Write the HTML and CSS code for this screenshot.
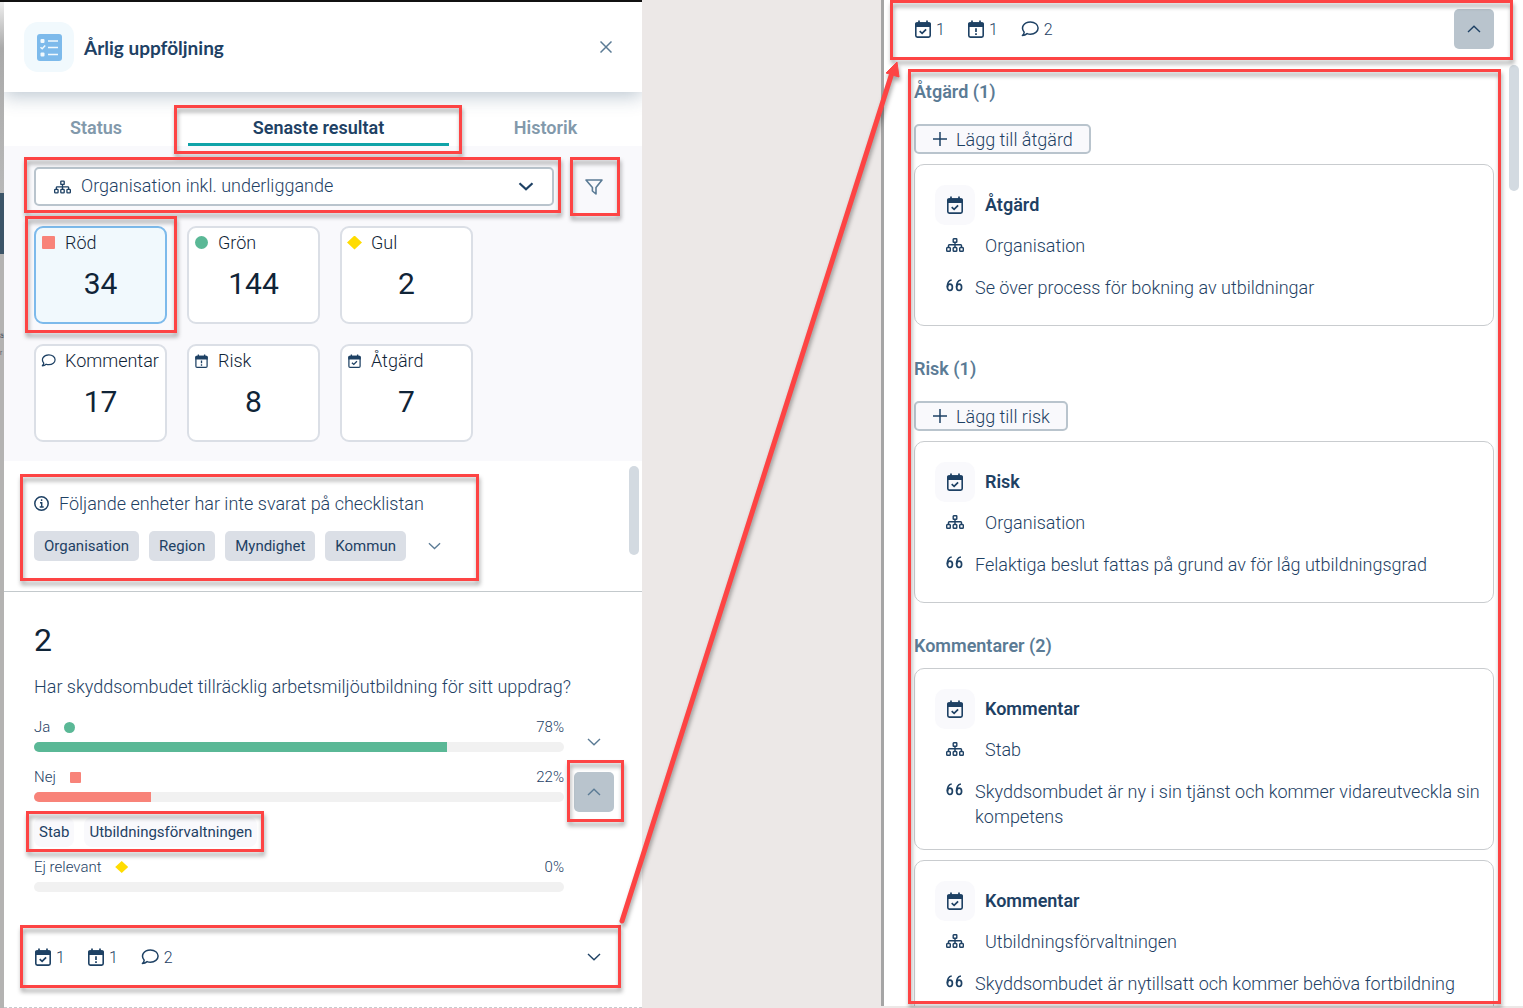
FILE: index.html
```html
<!DOCTYPE html>
<html lang="sv">
<head>
  <meta charset="UTF-8">
  <meta name="viewport" content="width=device-width, initial-scale=1.0">
  <title>Årlig uppföljning</title>
  <link rel="stylesheet" href="styles.css">
</head>
<body>
  <svg class="icon-defs" aria-hidden="true">
    <symbol id="calendar-check" viewBox="0 0 16 18">
      <path d="M4 .5v3M12 .5v3" stroke="currentColor" stroke-width="1.7" fill="none"/>
      <path d="M0 7V4.2Q0 2.3 2 2.3h12q2 0 2 1.900V7z" fill="currentColor"/>
      <rect x=".8" y="3.100" width="14.400" height="14" rx="1.500" fill="none" stroke="currentColor" stroke-width="1.600"/>
      <path d="M4.700 11.200l2.400 2.200 4-4.100" fill="none" stroke="currentColor" stroke-width="1.700"/>
    </symbol>
    <symbol id="calendar-alert" viewBox="0 0 16 18">
      <path d="M4 .5v3M12 .5v3" stroke="currentColor" stroke-width="1.700" fill="none"/>
      <path d="M0 7V4.200Q0 2.300 2 2.300h12q2 0 2 1.900V7z" fill="currentColor"/>
      <rect x=".8" y="3.100" width="14.400" height="14" rx="1.500" fill="none" stroke="currentColor" stroke-width="1.600"/>
      <path d="M8 8.300v3.700M8 13.300v1.700" fill="none" stroke="currentColor" stroke-width="1.700"/>
    </symbol>
    <symbol id="comment" viewBox="0 0 18 16">
      <path d="M3.200 11.200C-.6 6.800 2.600 1 9.400 1c4.400 0 7.700 2.700 7.700 6.100s-3.300 6.100-7.700 6.100c-1.200 0-2.300-.2-3.300-.6-1.300 1.200-2.900 1.900-4.700 1.900.9-.9 1.700-2 1.800-3.300z" fill="none" stroke="currentColor" stroke-width="1.500" stroke-linejoin="round"/>
    </symbol>
    <symbol id="sitemap" viewBox="0 0 18 14">
      <g fill="none" stroke="currentColor" stroke-width="1.400">
        <rect x="7.200" y=".7" width="3.600" height="3.600" rx=".6"/>
        <rect x=".7" y="9.500" width="3.600" height="3.800" rx=".8"/>
        <rect x="7.200" y="9.500" width="3.600" height="3.800" rx=".8"/>
        <rect x="13.700" y="9.500" width="3.600" height="3.800" rx=".8"/>
        <path d="M9 4.300v5.200M2.500 9.500V7.600q0-.8.8-.8h11.400q.8 0 .8.800v1.900"/>
      </g>
    </symbol>
    <symbol id="quote" viewBox="0 0 17 13">
      <g fill="none" stroke="currentColor" stroke-width="1.700">
        <ellipse cx="3.900" cy="8.300" rx="2.500" ry="3.200"/>
        <path d="M1.400 8.300C1.300 4 2.700 1.400 5.700 1"/>
        <ellipse cx="13.100" cy="8.300" rx="2.500" ry="3.200"/>
        <path d="M10.600 8.300C10.500 4 11.900 1.400 14.900 1"/>
      </g>
    </symbol>
    <symbol id="chevron-down" viewBox="0 0 14 8">
      <path d="M1 1l6 5.700L13 1" fill="none" stroke="currentColor" stroke-width="1.400"/>
    </symbol>
    <symbol id="chevron-up" viewBox="0 0 14 8">
      <path d="M1 7l6-5.700L13 7" fill="none" stroke="currentColor" stroke-width="1.400"/>
    </symbol>
    <symbol id="plus" viewBox="0 0 14 14">
      <path d="M7 0v14M0 7h14" stroke="currentColor" stroke-width="1.500"/>
    </symbol>
  </svg>

  <div class="board">
    <section class="frame frame-left">
      <div class="edge"><span>ä</span><span>r</span></div>
      <div class="panel">
        <header class="panel-header">
          <span class="logo">
            <svg width="26" height="28" viewBox="0 0 26 28" aria-hidden="true">
              <rect x="1" y="1" width="25" height="27" rx="3" fill="#7dbaeb"/>
              <g fill="none" stroke="#f1f9fd" stroke-width="1.500">
                <path d="M12 8h10M12 14.500h10M12 21.500h10M4.500 14.200l1.700 1.600 3-3.200"/>
              </g>
              <g fill="#f1f9fd">
                <rect x="4.500" y="6" width="4" height="4" rx="1"/>
                <rect x="4.500" y="19.500" width="4" height="4" rx="1"/>
              </g>
            </svg>
          </span>
          <h1>Årlig uppföljning</h1>
          <button class="close" aria-label="Stäng">
            <svg width="12" height="12" viewBox="0 0 12 12" aria-hidden="true"><path d="M.5.5l11 11M11.500.5l-11 11" stroke="currentColor" stroke-width="1.500"/></svg>
          </button>
        </header>

        <nav class="tabs">
          <a href="#">Status</a>
          <a href="#" class="active mark mark-tab" aria-current="page">Senaste resultat</a>
          <a href="#">Historik</a>
        </nav>

        <div class="filters">
          <div class="filter-row">
            <div class="select-wrap mark mark-select">
              <svg class="select-icon" width="17" height="14" aria-hidden="true"><use href="#sitemap"/></svg>
              <select aria-label="Organisation">
                <option>Organisation inkl. underliggande</option>
              </select>
              <svg class="select-arrow" width="16" height="9" viewBox="0 0 16 9" aria-hidden="true"><path d="M1.500 1.200L8 7.300l6.500-6.100" fill="none" stroke="currentColor" stroke-width="2.200"/></svg>
            </div>
            <button class="icon-btn mark mark-filter" aria-label="Filter">
              <svg width="18" height="16" viewBox="0 0 18 16" aria-hidden="true"><path d="M1 1h16l-6 7.500V15l-3.600-3V8.500z" fill="none" stroke="currentColor" stroke-width="1.600" stroke-linejoin="round"/></svg>
            </button>
          </div>

          <div class="cards">
            <button class="card selected mark mark-card">
              <span class="card-label"><i class="shape square"></i>Röd</span>
              <span class="card-value">34</span>
            </button>
            <button class="card">
              <span class="card-label"><i class="shape circle"></i>Grön</span>
              <span class="card-value">144</span>
            </button>
            <button class="card">
              <span class="card-label"><i class="shape diamond"></i>Gul</span>
              <span class="card-value">2</span>
            </button>
            <button class="card">
              <span class="card-label"><svg width="15" height="13" aria-hidden="true"><use href="#comment"/></svg>Kommentar</span>
              <span class="card-value">17</span>
            </button>
            <button class="card">
              <span class="card-label"><svg width="15" height="14" aria-hidden="true"><use href="#calendar-alert"/></svg>Risk</span>
              <span class="card-value">8</span>
            </button>
            <button class="card">
              <span class="card-label"><svg width="15" height="14" aria-hidden="true"><use href="#calendar-check"/></svg>Åtgärd</span>
              <span class="card-value">7</span>
            </button>
          </div>
        </div>

        <div class="results">
          <div class="thumb"></div>
          <div class="missing">
            <div class="missing-inner mark mark-missing">
              <p>
                <svg width="15" height="15" viewBox="0 0 15 15" aria-hidden="true"><circle cx="7.500" cy="7.500" r="6.700" fill="none" stroke="currentColor" stroke-width="1.500"/><path d="M7.600 3.300v1.800M6 6.800h1.700v4M5.700 11h4" fill="none" stroke="currentColor" stroke-width="1.400"/></svg>
                Följande enheter har inte svarat på checklistan
              </p>
              <div class="units">
                <span class="unit">Organisation</span>
                <span class="unit">Region</span>
                <span class="unit">Myndighet</span>
                <span class="unit">Kommun</span>
                <button class="more" aria-label="Visa fler"><svg width="13" height="8" aria-hidden="true"><use href="#chevron-down"/></svg></button>
              </div>
            </div>
          </div>

          <article class="question">
            <h2>2</h2>
            <p class="question-text">Har skyddsombudet tillräcklig arbetsmiljöutbildning för sitt uppdrag?</p>

            <div class="answer">
              <div class="answer-main">
                <div class="answer-label"><span>Ja <i class="shape circle small"></i></span><span>78%</span></div>
                <div class="bar"><div class="fill green" style="width: 78%"></div></div>
              </div>
              <button class="toggle" aria-label="Visa Ja"><svg width="14" height="8" aria-hidden="true"><use href="#chevron-down"/></svg></button>
            </div>

            <div class="answer">
              <div class="answer-main">
                <div class="answer-label"><span>Nej <i class="shape square small"></i></span><span>22%</span></div>
                <div class="bar"><div class="fill red" style="width: 22%"></div></div>
              </div>
              <button class="toggle open mark mark-toggle" aria-label="Dölj Nej"><svg width="14" height="8" aria-hidden="true"><use href="#chevron-up"/></svg></button>
            </div>
            <div class="departments mark mark-departments">
              <span>Stab</span>
              <span>Utbildningsförvaltningen</span>
            </div>

            <div class="answer">
              <div class="answer-main">
                <div class="answer-label"><span>Ej relevant <i class="shape diamond small"></i></span><span>0%</span></div>
                <div class="bar"></div>
              </div>
            </div>

            <div class="summary mark mark-summary">
              <span><svg width="16" height="18" aria-hidden="true"><use href="#calendar-check"/></svg>1</span>
              <span><svg width="16" height="18" aria-hidden="true"><use href="#calendar-alert"/></svg>1</span>
              <span><svg width="18" height="16" aria-hidden="true"><use href="#comment"/></svg>2</span>
              <button class="toggle dark" aria-label="Visa detaljer"><svg width="14" height="8" aria-hidden="true"><use href="#chevron-down"/></svg></button>
            </div>
          </article>
        </div>
      </div>
    </section>

    <div class="gutter">
      <svg class="arrow" viewBox="0 0 287 868" aria-hidden="true">
        <path d="M4 863L273 18" stroke="#fd4444" stroke-width="5" stroke-linecap="round"/>
        <path d="M279 4l2 15-13-4z" fill="#fd4444" stroke="#fd4444"/>
      </svg>
    </div>

    <section class="frame frame-right">
      <div class="edge"></div>
      <div class="panel">
        <div class="summary summary-top mark mark-top">
          <span><svg width="16" height="18" aria-hidden="true"><use href="#calendar-check"/></svg>1</span>
          <span><svg width="16" height="18" aria-hidden="true"><use href="#calendar-alert"/></svg>1</span>
          <span><svg width="18" height="16" aria-hidden="true"><use href="#comment"/></svg>2</span>
          <button class="toggle open dark" aria-label="Dölj detaljer"><svg width="14" height="8" aria-hidden="true"><use href="#chevron-up"/></svg></button>
        </div>
        <div class="thumb"></div>

        <div class="details mark mark-details">
          <div class="details-scroll">
            <section class="group">
              <h3>Åtgärd (1)</h3>
              <button class="add"><svg width="14" height="14" aria-hidden="true"><use href="#plus"/></svg>Lägg till åtgärd</button>
              <article class="item">
                <div class="item-title"><span class="item-icon"><svg width="16" height="18" aria-hidden="true"><use href="#calendar-check"/></svg></span><h4>Åtgärd</h4></div>
                <div class="item-unit"><svg width="18" height="14" aria-hidden="true"><use href="#sitemap"/></svg>Organisation</div>
                <div class="item-text"><svg width="17" height="13" aria-hidden="true"><use href="#quote"/></svg><p>Se över process för bokning av utbildningar</p></div>
              </article>
            </section>

            <section class="group">
              <h3>Risk (1)</h3>
              <button class="add"><svg width="14" height="14" aria-hidden="true"><use href="#plus"/></svg>Lägg till risk</button>
              <article class="item">
                <div class="item-title"><span class="item-icon"><svg width="16" height="18" aria-hidden="true"><use href="#calendar-check"/></svg></span><h4>Risk</h4></div>
                <div class="item-unit"><svg width="18" height="14" aria-hidden="true"><use href="#sitemap"/></svg>Organisation</div>
                <div class="item-text"><svg width="17" height="13" aria-hidden="true"><use href="#quote"/></svg><p>Felaktiga beslut fattas på grund av för låg utbildningsgrad</p></div>
              </article>
            </section>

            <section class="group">
              <h3>Kommentarer (2)</h3>
              <article class="item">
                <div class="item-title"><span class="item-icon"><svg width="16" height="18" aria-hidden="true"><use href="#calendar-check"/></svg></span><h4>Kommentar</h4></div>
                <div class="item-unit"><svg width="18" height="14" aria-hidden="true"><use href="#sitemap"/></svg>Stab</div>
                <div class="item-text"><svg width="17" height="13" aria-hidden="true"><use href="#quote"/></svg><p>Skyddsombudet är ny i sin tjänst och kommer vidareutveckla sin kompetens</p></div>
              </article>
              <article class="item">
                <div class="item-title"><span class="item-icon"><svg width="16" height="18" aria-hidden="true"><use href="#calendar-check"/></svg></span><h4>Kommentar</h4></div>
                <div class="item-unit"><svg width="18" height="14" aria-hidden="true"><use href="#sitemap"/></svg>Utbildningsförvaltningen</div>
                <div class="item-text"><svg width="17" height="13" aria-hidden="true"><use href="#quote"/></svg><p>Skyddsombudet är nytillsatt och kommer behöva fortbildning</p></div>
              </article>
            </section>
          </div>
        </div>
      </div>
    </section>
  </div>
</body>
</html>
```
FILE: styles.css
```css
* {
  box-sizing: border-box;
}

body {
  margin: 0;
  background-color: #ece8e7;
  color: #1e4164;
  font-family: Roboto, sans-serif;
  font-size: 18px;
  font-weight: 300;
  line-height: 25px;
}

h1, h2, h3, h4, p {
  margin: 0;
}

button {
  padding: 0;
  border: none;
  background: none;
  color: inherit;
  font: inherit;
  cursor: pointer;
}

svg {
  flex-shrink: 0;
}

.icon-defs {
  display: none;
}

.board {
  display: grid;
  grid-template-columns: 642fr 239fr 642fr;
  height: 100vh;
  overflow: hidden;
}

.frame {
  display: flex;
  min-width: 0;
  min-height: 0;
}
.frame-left {
  border-top: 2px solid #111;
}
.frame-right {
  padding-bottom: 2px;
}

.edge {
  width: 4px;
  background: linear-gradient(#eee 0, #aaa 46px, #b8b8b8 191px, #3c5568 191px, #3c5568 252px, #b4b3b2 252px);
  color: #1e2f45;
  font-size: 7px;
  line-height: 17px;
}
.edge span {
  display: block;
}
.edge span:first-child {
  margin-top: 326px;
}
.frame-right .edge {
  width: 3px;
  background: #a5a5a5;
}

.panel {
  position: relative;
  display: flex;
  flex: 1;
  flex-direction: column;
  min-width: 0;
  background-color: #fff;
}

/* Header */
.panel-header {
  position: relative;
  z-index: 1;
  display: flex;
  align-items: center;
  gap: 10px;
  height: 90px;
  padding: 0 30px 0 20px;
  background-color: #fff;
  box-shadow: 0 4px 18px rgba(30, 65, 100, 0.3);
  clip-path: inset(0 0 -30px 0);
}
.logo {
  display: flex;
  align-items: center;
  justify-content: center;
  width: 50px;
  height: 50px;
  border-radius: 14px;
  background-color: #f1f9fd;
}
h1 {
  flex: 1;
  font-family: Lato, sans-serif;
  font-size: 19px;
  font-weight: 700;
}
.close {
  display: flex;
  color: #5b7b95;
}

/* Tabs */
.tabs {
  display: grid;
  grid-template-columns: 184fr 261fr 193fr;
  height: 54px;
}
.tabs a {
  padding-top: 23px;
  color: #8299ab;
  font-weight: 600;
  text-align: center;
  text-decoration: none;
}
.tabs .active {
  border-bottom: 3px solid #0fa3a8;
  color: #1e4164;
}

/* Filters */
.filters {
  padding: 21px 28px 19px 30px;
  background-color: #f9f9fc;
}
.filter-row {
  display: flex;
  gap: 20px;
  margin-bottom: 20px;
}
.select-wrap {
  display: flex;
  flex: 1;
  align-items: center;
}
.select-wrap select {
  width: 100%;
  height: 39px;
  padding: 0 45px 2px;
  border: 2px solid #b9c4cd;
  border-radius: 5px;
  appearance: none;
  background-color: #fff;
  color: #1e4164;
  font: inherit;
}
.select-icon, .select-arrow {
  position: absolute;
  pointer-events: none;
}
.select-icon {
  left: 20px;
}
.select-arrow {
  right: 20px;
}
.icon-btn {
  width: 40px;
  height: 39px;
  color: #5b7b95;
}
.icon-btn svg {
  display: block;
  margin: auto;
}

.cards {
  display: grid;
  grid-template-columns: repeat(3, 133px);
  gap: 20px;
}
.card {
  display: flex;
  flex-direction: column;
  height: 98px;
  padding: 2px 5px;
  border: 2px solid #dbdfe6;
  border-radius: 9px;
  background-color: #fff;
  color: #102437;
}
.card.selected {
  border-color: #7dbaeb;
  background-color: #f1f9fd;
}
.card-label {
  display: flex;
  align-items: center;
  gap: 9px;
}
.card-label svg {
  color: #1e4164;
}
.card-value {
  align-self: center;
  margin-top: 12px;
  font-size: 30px;
  font-weight: 400;
  line-height: 34px;
}

.shape {
  display: inline-block;
  width: 13px;
  height: 13px;
  margin: 0 1px;
}
.square {
  border-radius: 1px;
  background-color: #f88379;
}
.circle {
  border-radius: 50%;
  background-color: #5ab896;
}
.diamond {
  width: 15px;
  height: 14px;
  margin: 0;
  background-color: #ffdc00;
  clip-path: polygon(50% 0, 100% 50%, 50% 100%, 0 50%);
}
.shape.small {
  width: 11px;
  height: 11px;
  margin: 0 0 0 10px;
  vertical-align: -1px;
}
.diamond.small {
  width: 13px;
  height: 12px;
}

/* Results */
.results {
  position: relative;
  flex: 1;
  border-bottom: 1px dashed #c8cbce;
}
.thumb {
  position: absolute;
  top: 5px;
  right: 3px;
  width: 10px;
  height: 89px;
  border-radius: 5px;
  background-color: #d3dae1;
}
.missing {
  padding: 30px;
  border-bottom: 1px solid #c3c9cc;
}
.missing-inner {
  width: fit-content;
}
.missing p {
  display: flex;
  align-items: center;
  gap: 10px;
}
.units {
  display: flex;
  gap: 10px;
  margin-top: 15px;
}
.unit {
  padding: 0 10px;
  border-radius: 5px;
  background-color: #dbdfe6;
  font-size: 15px;
  font-weight: 400;
  line-height: 30px;
}
.more {
  display: flex;
  align-items: center;
  margin-left: 12px;
  color: #5b7b95;
}

.question {
  padding: 29px 28px 0 30px;
}
.question h2 {
  color: #102437;
  font-size: 32px;
  font-weight: 400;
  line-height: 38px;
}
.question-text {
  margin: 15px 0 18px;
}
.answer {
  display: flex;
  gap: 10px;
  height: 50px;
}
.answer-main {
  flex: 1;
}
.answer:has(.answer-main:only-child) {
  padding-right: 50px;
}
.answer-label {
  display: flex;
  justify-content: space-between;
  font-size: 15px;
  line-height: 20px;
}
.bar {
  height: 10px;
  margin-top: 5px;
  overflow: hidden;
  border-radius: 5px;
  background-color: #f1f1f1;
}
.fill {
  height: 100%;
}
.green {
  background-color: #5ab896;
}
.red {
  background-color: #f88379;
}
.toggle {
  display: flex;
  align-items: center;
  justify-content: center;
  align-self: center;
  width: 40px;
  height: 40px;
  border-radius: 5px;
  color: #5b7b95;
}
.toggle.open {
  background-color: #b9c4cd;
}
.toggle.dark {
  color: #1e4164;
}
.departments {
  display: flex;
  gap: 10px;
  width: fit-content;
  margin-bottom: 10px;
  font-size: 15px;
  font-weight: 400;
  line-height: 30px;
}
.departments span {
  padding: 0 5px;
  border-radius: 8px;
  background-color: #f9f9fc;
}

.summary {
  display: flex;
  align-items: center;
  gap: 23px;
  margin-top: 30px;
  padding-left: 1px;
}
.summary span {
  display: flex;
  align-items: center;
  gap: 5px;
  font-size: 16px;
}
.summary .toggle {
  margin-left: auto;
}

/* Details */
.summary-top {
  margin: 9px 29px 0 30px;
}
.frame-right .thumb {
  top: 65px;
  right: 4px;
  height: 126px;
}
.details {
  flex: 1;
  min-height: 0;
  margin-top: 20px;
}
.details-scroll {
  height: 100%;
  padding: 10px 29px 0 30px;
  overflow: hidden;
}
.group {
  display: flex;
  flex-direction: column;
  align-items: flex-start;
  gap: 10px;
  margin-bottom: 30px;
}
.group h3 {
  color: #5b7b95;
  font-size: 18px;
  font-weight: 600;
}
.add {
  display: flex;
  align-items: center;
  gap: 9px;
  height: 30px;
  margin-top: 10px;
  padding: 0 16px 0 17px;
  border: 2px solid #b9c4cd;
  border-radius: 5px;
  background-color: #f9f9fc;
}
.item {
  width: 100%;
  padding: 20px 12px 20px 20px;
  border: 1px solid #c9cccf;
  border-radius: 10px;
}
.item-title {
  display: flex;
  align-items: center;
  gap: 10px;
}
.item-icon {
  display: flex;
  align-items: center;
  justify-content: center;
  width: 40px;
  height: 40px;
  border-radius: 10px;
  background-color: #f9f9fc;
}
.item h4 {
  font-size: 18px;
  font-weight: 600;
  line-height: 24px;
}
.item-unit {
  display: flex;
  align-items: center;
  gap: 21px;
  height: 40px;
  padding-left: 11px;
}
.item-text {
  display: flex;
  gap: 12px;
  min-height: 30px;
  margin-top: 10px;
  padding-left: 11px;
}
.item-text svg {
  margin-top: 4px;
}

/* Red frames and the arrow */
.mark {
  position: relative;
}
.mark::after {
  content: "";
  position: absolute;
  z-index: 2;
  border: 3px solid #fd4444;
  filter: drop-shadow(1px 4px 2px rgba(0, 0, 0, 0.35));
  pointer-events: none;
}
.mark-tab::after {
  inset: 13px -13px -11px -14px;
}
.mark-select::after {
  inset: -10px -7px -7px -10px;
}
.mark-filter::after {
  inset: -10px -6px -10px -4px;
}
.mark-card::after {
  inset: -12px -12px -11px -11px;
}
.mark-missing::after {
  inset: -17px -38px -20px -14px;
}
.mark-toggle::after {
  inset: -12px -10px -10px -7px;
}
.mark-departments::after {
  inset: -6px -7px -5px -8px;
}
.mark-summary::after {
  inset: -12px -7px -11px -14px;
}
.mark-top::after {
  inset: -9px -19px -11px -24px;
}
.mark-details::after {
  inset: 0 22px 2px 24px;
}

.gutter {
  position: relative;
  z-index: 3;
}
.arrow {
  position: absolute;
  top: 58px;
  left: -24px;
  width: calc(100% + 48px);
  filter: drop-shadow(1px 4px 2px rgba(0, 0, 0, 0.35));
  pointer-events: none;
}
```
